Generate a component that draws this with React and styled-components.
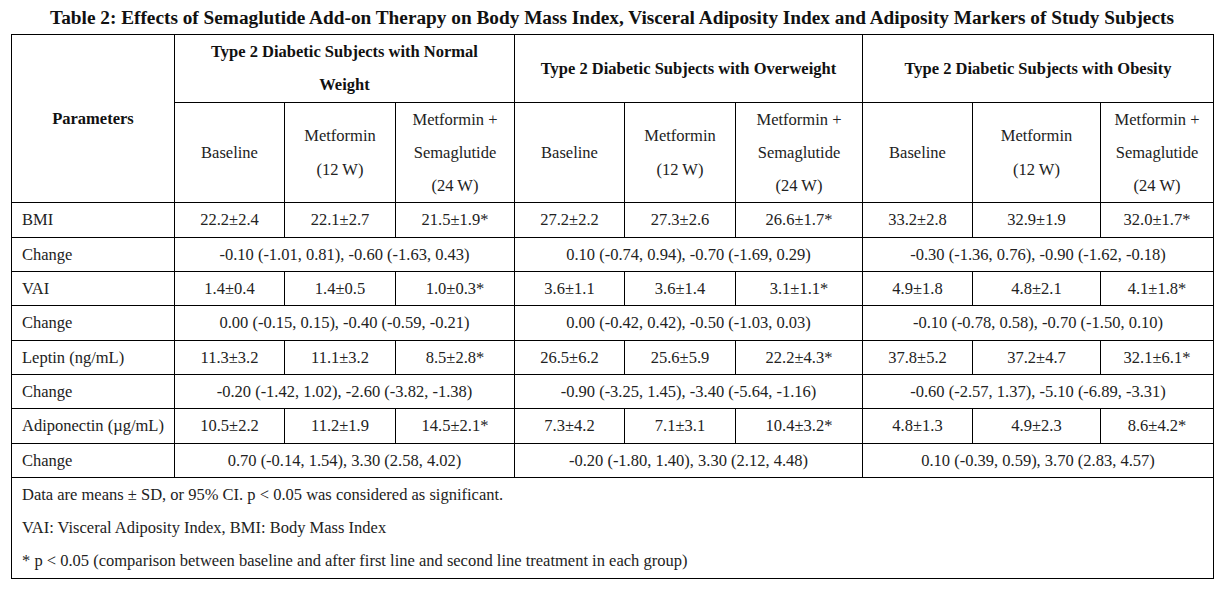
import React from "react";
import styled, { createGlobalStyle } from "styled-components";

const Global = createGlobalStyle`
  html, body { margin: 0; padding: 0; background: #fff; }
  body { font-family: "Liberation Serif", "Times New Roman", serif; color: #000; }
`;

const Page = styled.div`
  width: 1221px;
  height: 594px;
  box-sizing: border-box;
  padding: 0 8px 0 11px;
  display: flex;
  flex-direction: column;
`;

const Title = styled.h1`
  margin: 0;
  height: 34px;
  line-height: 36px;
  font-size: 19.3px;
  font-weight: bold;
  text-align: center;
  width: 1202px;
  white-space: nowrap;
  color: #111;
`;

const Table = styled.table`
  border-collapse: collapse;
  table-layout: fixed;
  width: 1203px;
  font-size: 16.5px;
`;

const Th = styled.th`
  border: 1px solid #000;
  padding: 0;
  font-weight: bold;
  line-height: 33.3px;
  text-align: center;
  vertical-align: middle;
  color: #111;
`;

const SubTh = styled.th`
  border: 1px solid #000;
  padding: 0;
  font-weight: normal;
  line-height: 33.3px;
  text-align: center;
  vertical-align: middle;
  color: #222;
`;

const Td = styled.td`
  border: 1px solid #000;
  padding: ${(p) => (p.$left ? "0 0 0 10px" : "0")};
  line-height: 33.3px;
  text-align: ${(p) => (p.$left ? "left" : "center")};
  vertical-align: middle;
  color: #222;
  white-space: nowrap;
`;

const Note = styled.td`
  border: 1px solid #000;
  padding: 0 0 0 10px;
  line-height: 33.3px;
  text-align: left;
  color: #222;
`;

const widths = [163, 110, 111, 119, 110, 111, 127, 110, 128, 113];

const rows = [
  {
    name: "BMI",
    vals: ["22.2±2.4", "22.1±2.7", "21.5±1.9*", "27.2±2.2", "27.3±2.6", "26.6±1.7*", "33.2±2.8", "32.9±1.9", "32.0±1.7*"],
    change: ["-0.10 (-1.01, 0.81), -0.60 (-1.63, 0.43)", "0.10 (-0.74, 0.94), -0.70 (-1.69, 0.29)", "-0.30 (-1.36, 0.76), -0.90 (-1.62, -0.18)"],
  },
  {
    name: "VAI",
    vals: ["1.4±0.4", "1.4±0.5", "1.0±0.3*", "3.6±1.1", "3.6±1.4", "3.1±1.1*", "4.9±1.8", "4.8±2.1", "4.1±1.8*"],
    change: ["0.00 (-0.15, 0.15), -0.40 (-0.59, -0.21)", "0.00 (-0.42, 0.42), -0.50 (-1.03, 0.03)", "-0.10 (-0.78, 0.58), -0.70 (-1.50, 0.10)"],
  },
  {
    name: "Leptin (ng/mL)",
    vals: ["11.3±3.2", "11.1±3.2", "8.5±2.8*", "26.5±6.2", "25.6±5.9", "22.2±4.3*", "37.8±5.2", "37.2±4.7", "32.1±6.1*"],
    change: ["-0.20 (-1.42, 1.02), -2.60 (-3.82, -1.38)", "-0.90 (-3.25, 1.45), -3.40 (-5.64, -1.16)", "-0.60 (-2.57, 1.37), -5.10 (-6.89, -3.31)"],
  },
  {
    name: "Adiponectin (µg/mL)",
    vals: ["10.5±2.2", "11.2±1.9", "14.5±2.1*", "7.3±4.2", "7.1±3.1", "10.4±3.2*", "4.8±1.3", "4.9±2.3", "8.6±4.2*"],
    change: ["0.70 (-0.14, 1.54), 3.30 (2.58, 4.02)", "-0.20 (-1.80, 1.40), 3.30 (2.12, 4.48)", "0.10 (-0.39, 0.59), 3.70 (2.83, 4.57)"],
  },
];

const groups = [
  <>Type 2 Diabetic Subjects with Normal<br />Weight</>,
  <>Type 2 Diabetic Subjects with Overweight</>,
  <>Type 2 Diabetic Subjects with Obesity</>,
];

const SubHeads = () => (
  <>
    <SubTh>Baseline</SubTh>
    <SubTh>Metformin<br />(12 W)</SubTh>
    <SubTh>Metformin +<br />Semaglutide<br />(24 W)</SubTh>
  </>
);

export default function App() {
  return (
    <Page>
      <Global />
      <Title>
        Table 2: Effects of Semaglutide Add-on Therapy on Body Mass Index, Visceral Adiposity Index and Adiposity Markers of Study Subjects
      </Title>
      <Table>
        <colgroup>
          {widths.map((w, i) => (
            <col key={i} style={{ width: w }} />
          ))}
        </colgroup>
        <thead>
          <tr>
            <Th rowSpan={2}>Parameters</Th>
            {groups.map((g, i) => (
              <Th key={i} colSpan={3}>{g}</Th>
            ))}
          </tr>
          <tr>
            <SubHeads />
            <SubHeads />
            <SubHeads />
          </tr>
        </thead>
        <tbody>
          {rows.map((r) => (
            <React.Fragment key={r.name}>
              <tr>
                <Td $left>{r.name}</Td>
                {r.vals.map((v, i) => (
                  <Td key={i}>{v}</Td>
                ))}
              </tr>
              <tr>
                <Td $left>Change</Td>
                {r.change.map((c, i) => (
                  <Td key={i} colSpan={3}>{c}</Td>
                ))}
              </tr>
            </React.Fragment>
          ))}
          <tr>
            <Note colSpan={10}>
              Data are means ± SD, or 95% CI. p &lt; 0.05 was considered as significant.
              <br />
              VAI: Visceral Adiposity Index, BMI: Body Mass Index
              <br />
              * p &lt; 0.05 (comparison between baseline and after first line and second line treatment in each group)
            </Note>
          </tr>
        </tbody>
      </Table>
    </Page>
  );
}
